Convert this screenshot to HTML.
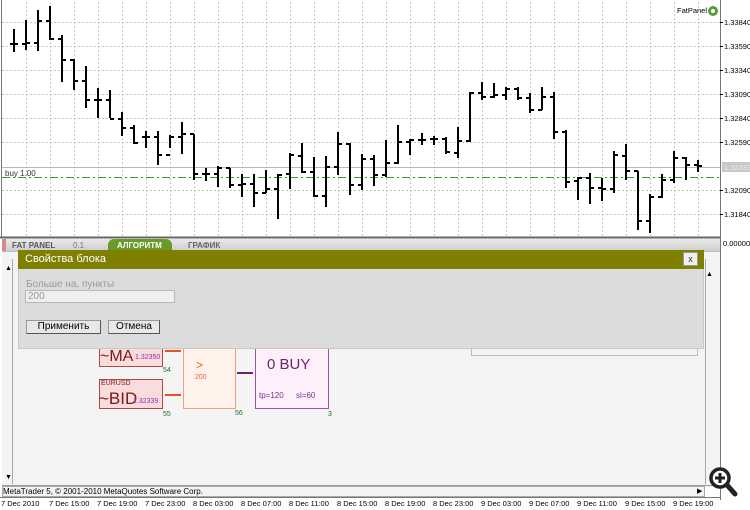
<!DOCTYPE html>
<html><head><meta charset="utf-8"><style>
*{margin:0;padding:0;box-sizing:border-box}
body{width:750px;height:510px;background:#fff;position:relative;overflow:hidden;font-family:"Liberation Sans",Arial,sans-serif;font-size:9px;color:#000}
.a{position:absolute}
</style></head><body>
<svg class="a" style="left:0;top:0" width="750" height="510" xmlns="http://www.w3.org/2000/svg">
<g stroke="#c8c8c8" stroke-width="1" stroke-dasharray="2,2">
<path d="M26.5 2V237M50.5 2V237M74.5 2V237M98.5 2V237M122.5 2V237M146.5 2V237M170.5 2V237M194.5 2V237M218.5 2V237M242.5 2V237M266.5 2V237M290.5 2V237M314.5 2V237M338.5 2V237M362.5 2V237M386.5 2V237M410.5 2V237M434.5 2V237M458.5 2V237M482.5 2V237M506.5 2V237M530.5 2V237M554.5 2V237M578.5 2V237M602.5 2V237M626.5 2V237M650.5 2V237M674.5 2V237M698.5 2V237"/>
<path d="M2 22.5H720M2 46.5H720M2 70.5H720M2 94.5H720M2 118.5H720M2 142.5H720M2 214.5H720"/>
</g>
<path d="M2 190.5H720" stroke="#a8d0a8" stroke-dasharray="2,2"/>
<path d="M2 167.5H720" stroke="#b8b8b8"/>
<path d="M2 177.5H720" stroke="#2ea02e" stroke-dasharray="8,3,2,3"/>
<text x="5" y="176" font-size="8" fill="#333" font-family="Liberation Sans">buy 1.00</text>
<g stroke="#000" stroke-width="2" fill="none">
<path d="M14 29V52M10 44H14M14 44H18M26 20V50M22 44H26M26 43H30M38 10V51M34 43H38M38 21H42M50 6V40M46 21H50M50 39H54M62 35V82M58 39H62M62 60H66M74 59V90M70 60H74M74 81H78M86 66V108M82 81H86M86 100H90M98 88V118M94 100H98M98 100H102M110 90V118M106 100H110M110 119H114M122 112V136M118 119H122M122 128H126M134 125V144M130 128H134M134 143H138M146 131V148M142 137H146M146 137H150M158 131V165M154 137H158M158 155H162M170 135V148M166 155H170M170 137H174M182 122V154M178 137H182M182 134H186M194 134V180M190 134H194M194 174H198M206 168V181M202 174H206M206 174H210M218 166V187M214 174H218M218 168H222M230 168V188M226 168H230M230 185H234M242 174V197M238 185H242M242 184H246M254 174V207M250 184H254M254 193H258M266 170V193M262 193H266M266 189H270M278 174V219M274 189H278M278 175H282M290 153V189M286 174H290M290 155H294"/>
<path d="M302 143V173M298 156H302M302 172H306M314 157V197M310 172H314M314 196H318M326 156V207M322 196H326M326 167H330M338 132V175M334 167H338M338 144H342M350 143V195M346 144H350M350 185H354M362 154V190M358 185H362M362 159H366M374 155V186M370 159H374M374 175H378M386 140V177M382 175H386M386 163H390M398 125V164M394 163H398M398 142H402M410 139V155M406 142H410M410 140H414M422 133V145M418 140H422M422 140H426M434 136V145M430 139H434M434 139H438M446 137V154M442 139H446M446 152H450M458 127V158M454 153H458M458 141H462M470 92V142M466 141H470M470 93H474M482 82V100M478 93H482M482 97H486M494 83V98M490 97H494M494 95H498M506 87V100M502 95H506M506 89H510M518 87V100M514 89H518M518 98H522M530 93V113M526 98H530M530 110H534M542 87V110M538 110H542M542 97H546M554 92V139M550 97H554M554 132H558"/>
<path d="M566 130V188M562 132H566M566 182H570M578 177V200M574 181H578M578 178H582M590 173V204M586 178H590M590 188H594M602 178V201M598 188H602M602 189H606M614 151V193M610 189H614M614 155H618M626 144V180M622 156H626M626 171H630M638 171V230M634 171H638M638 221H642M650 194V233M646 221H650M650 197H654M662 174V198M658 197H662M662 180H666M674 151V183M670 180H674M674 158H678M686 157V180M682 158H686M686 165H690M698 160V172M694 165H698M698 166H702"/>
</g>
<path d="M1.5 0V238M720.5 0V500" stroke="#777"/>
<path d="M0 237.5H721" stroke="#666" stroke-width="2"/>
<g font-size="7.5" fill="#000" font-family="Liberation Sans">
<path d="M720 22.5h3M720 46.5h3M720 70.5h3M720 94.5h3M720 118.5h3M720 142.5h3M720 190.5h3M720 214.5h3" stroke="#000"/>
<text x="724" y="25">1.33840</text><text x="724" y="49">1.33590</text><text x="724" y="73">1.33340</text><text x="724" y="97">1.33090</text><text x="724" y="121">1.32840</text><text x="724" y="145">1.32590</text><text x="724" y="193">1.32090</text><text x="724" y="217">1.31840</text>
<rect x="722" y="162" width="28" height="10" fill="#c8c8c8"/><text x="724" y="170" fill="#eee">1.32333</text>
<text x="723" y="246">0.00000</text>
<text x="677" y="13">FatPanel</text>
</g>
<circle cx="713" cy="11" r="5" fill="#5a9a3a"/><circle cx="713" cy="11" r="2" fill="#fff"/>
</svg>

<div class="a" style="left:2px;top:239px;width:718px;height:12px;background:linear-gradient(#e8e8e8,#cfcfcf)"></div>
<div class="a" style="left:2px;top:239px;width:4px;height:12px;background:#d88"></div>
<div class="a" style="left:12px;top:241px;font-size:8px;font-weight:bold;color:#555">FAT PANEL</div>
<div class="a" style="left:73px;top:241px;font-size:8px;color:#777">0.1</div>
<div class="a" style="left:108px;top:239px;width:64px;height:12px;background:#6a9a2a;border-radius:6px 6px 0 0"></div>
<div class="a" style="left:117px;top:241px;font-size:8px;font-weight:bold;color:#fff">АЛГОРИТМ</div>
<div class="a" style="left:188px;top:241px;font-size:8px;font-weight:bold;color:#666">ГРАФИК</div>
<div class="a" style="left:2px;top:251px;width:718px;height:236px;background:#f4f4f4;border-top:1px solid #bbb"></div>
<div class="a" style="left:12px;top:259px;width:1px;height:225px;background:#aaa"></div>
<div class="a" style="left:5px;top:265px;font-size:7px">▲</div>
<div class="a" style="left:5px;top:474px;font-size:7px">▼</div>
<div class="a" style="left:705px;top:259px;width:1px;height:225px;background:#aaa"></div>
<div class="a" style="left:706px;top:271px;font-size:7px">▲</div>
<div class="a" style="left:471px;top:346px;width:227px;height:10px;border:1px solid #bbb"></div>

<div class="a" style="left:99px;top:340px;width:64px;height:27px;background:#fadcdc;border:1px solid #b04848"></div>
<div class="a" style="left:100px;top:348px;font-size:16px;color:#7a1818">~MA</div>
<div class="a" style="left:135px;top:354px;font-size:7px;color:#9030b0">1.32350</div>
<div class="a" style="left:99px;top:379px;width:64px;height:30px;background:#fadcdc;border:1px solid #b04848"></div>
<div class="a" style="left:101px;top:380px;font-size:7px;color:#7a1818">EURUSD</div>
<div class="a" style="left:99px;top:389px;font-size:17px;color:#7a1818">~BID</div>
<div class="a" style="left:133px;top:398px;font-size:7px;color:#9030b0">1.32339</div>
<div class="a" style="left:165px;top:350px;width:16px;height:2px;background:#e8502a"></div>
<div class="a" style="left:165px;top:394px;width:16px;height:2px;background:#e8502a"></div>
<div class="a" style="left:183px;top:340px;width:53px;height:69px;background:#fff2ea;border:1px solid #f0a080"></div>
<div class="a" style="left:196px;top:358px;font-size:12px;color:#e86030">&gt;</div>
<div class="a" style="left:195px;top:374px;font-size:7px;color:#e86030">200</div>
<div class="a" style="left:237px;top:372px;width:16px;height:2px;background:#702070"></div>
<div class="a" style="left:255px;top:340px;width:74px;height:69px;background:#fdf0fb;border:1px solid #a050a0"></div>
<div class="a" style="left:267px;top:356px;font-size:15px;color:#702070">0 BUY</div>
<div class="a" style="left:259px;top:391px;font-size:8px;color:#8030a0">tp=120</div>
<div class="a" style="left:296px;top:391px;font-size:8px;color:#8030a0">sl=60</div>
<div class="a" style="left:163px;top:367px;font-size:7px;color:#2a6a2a">54</div>
<div class="a" style="left:163px;top:411px;font-size:7px;color:#2a6a2a">55</div>
<div class="a" style="left:235px;top:410px;font-size:7px;color:#2a6a2a">56</div>
<div class="a" style="left:328px;top:411px;font-size:7px;color:#2a6a2a">3</div>

<div class="a" style="left:18px;top:250px;width:686px;height:99px;background:#dcdcdc;border:1px solid #c8c8c8"></div>
<div class="a" style="left:18px;top:250px;width:686px;height:19px;background:#808000"></div>
<div class="a" style="left:25px;top:253px;font-size:11px;color:#fff">Свойства блока</div>
<div class="a" style="left:683px;top:252px;width:15px;height:14px;background:#f0f0f0;border:1px solid #999;font-size:9px;text-align:center;line-height:12px;color:#333">x</div>
<div class="a" style="left:26px;top:279px;font-size:10px;color:#999">Больше на, пункты</div>
<div class="a" style="left:25px;top:290px;width:150px;height:13px;background:#efefef;border:1px solid #b8b8b8;font-size:10px;color:#999;padding-left:2px;line-height:11px">200</div>
<div class="a" style="left:26px;top:320px;width:75px;height:14px;background:#e8e8e8;border:1px solid #999;border-right-color:#555;border-bottom-color:#555;font-size:10px;text-align:center;line-height:12px">Применить</div>
<div class="a" style="left:108px;top:320px;width:52px;height:14px;background:#e8e8e8;border:1px solid #999;border-right-color:#555;border-bottom-color:#555;font-size:10px;text-align:center;line-height:12px">Отмена</div>

<div class="a" style="left:2px;top:485px;width:718px;height:1px;background:#999"></div>
<div class="a" style="left:2px;top:486px;width:703px;height:11px;background:#f4f4f4;border:1px solid #aaa"></div>
<div class="a" style="left:3px;top:487px;font-size:8px">MetaTrader 5, © 2001-2010 MetaQuotes Software Corp.</div>
<div class="a" style="left:697px;top:487px;font-size:7px">▶</div>
<div class="a" style="left:0;top:497px;width:720px;height:1px;background:#777"></div>
<div class="a" style="left:0;top:499px;width:750px;font-size:7.5px;white-space:nowrap">
<span class="a" style="left:1px">7 Dec 2010</span><span class="a" style="left:49px">7 Dec 15:00</span><span class="a" style="left:97px">7 Dec 19:00</span><span class="a" style="left:145px">7 Dec 23:00</span><span class="a" style="left:193px">8 Dec 03:00</span><span class="a" style="left:241px">8 Dec 07:00</span><span class="a" style="left:289px">8 Dec 11:00</span><span class="a" style="left:337px">8 Dec 15:00</span><span class="a" style="left:385px">8 Dec 19:00</span><span class="a" style="left:433px">8 Dec 23:00</span><span class="a" style="left:481px">9 Dec 03:00</span><span class="a" style="left:529px">9 Dec 07:00</span><span class="a" style="left:577px">9 Dec 11:00</span><span class="a" style="left:625px">9 Dec 15:00</span><span class="a" style="left:673px">9 Dec 19:00</span>
</div>
<svg class="a" style="left:708px;top:466px" width="40" height="34">
<circle cx="12" cy="12" r="9" fill="#fff" stroke="#222" stroke-width="3.5"/>
<path d="M12 7V17M7 12H17" stroke="#222" stroke-width="3"/>
<path d="M19 19L27 28" stroke="#222" stroke-width="5" stroke-linecap="round"/>
</svg>
</body></html>
